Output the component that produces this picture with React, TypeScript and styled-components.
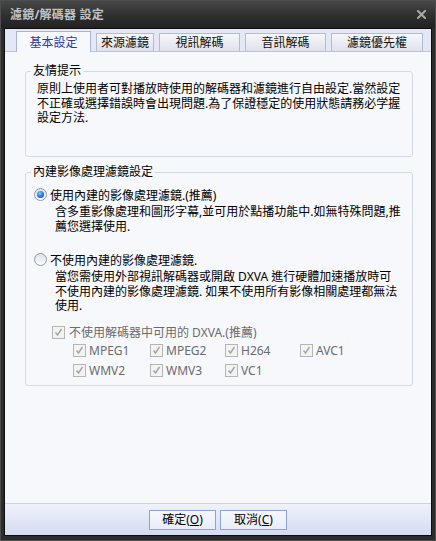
import styled, { createGlobalStyle, css } from "styled-components";

const GlobalStyle = createGlobalStyle`
  html, body {
    margin: 0;
    padding: 0;
    background: #2b2b2b;
  }
  body {
    font-family: "Noto Sans", "Noto Sans CJK TC", sans-serif;
    font-size: 12px;
    color: #000;
  }
`;

const tabs = [
  { label: "基本設定", width: 75, active: true },
  { label: "來源濾鏡", width: 58 },
  { label: "視訊解碼", width: 81 },
  { label: "音訊解碼", width: 81 },
  { label: "濾鏡優先權", width: 92 },
];

const codecs = ["MPEG1", "MPEG2", "H264", "AVC1", "WMV2", "WMV3", "VC1"];

export default function App() {
  return (
    <>
      <GlobalStyle />
      <Window>
        <TitleBar>
          <Title>濾鏡/解碼器 設定</Title>
          <CloseIcon />
        </TitleBar>
        <Client>
          <TabStrip>
            {tabs.map((t) => (
              <Tab key={t.label} $w={t.width} $active={t.active}>
                {t.label}
              </Tab>
            ))}
          </TabStrip>

          <Panel>
            <Group>
              <Legend>友情提示</Legend>
              <TipText>
                <Line>原則上使用者可對播放時使用的解碼器和濾鏡進行自由設定.當然設定</Line>
                <Line>不正確或選擇錯誤時會出現問題.為了保證穩定的使用狀態請務必学握</Line>
                <Line>設定方法.</Line>
              </TipText>
            </Group>

            <Group $spaced $pad={8}>
              <Legend $shift={-3}>內建影像處理濾鏡設定</Legend>
              <OptionRow $top={8}>
                <Radio $checked />
                <span>使用內建的影像處理濾鏡.(推薦)</span>
              </OptionRow>
              <Description>
                <Line>含多重影像處理和圖形字幕,並可用於點播功能中.如無特殊問題,推</Line>
                <Line>薦您選擇使用.</Line>
              </Description>

              <OptionRow $top={18}>
                <Radio />
                <span>不使用內建的影像處理濾鏡.</span>
              </OptionRow>
              <Description>
                <Line>當您需使用外部視訊解碼器或開啟 DXVA 進行硬體加速播放時可</Line>
                <Line>不使用內建的影像處理濾鏡. 如果不使用所有影像相關處理都無法</Line>
                <Line>使用.</Line>
              </Description>

              <CheckRow>
                <CheckBox />
                <span>不使用解碼器中可用的 DXVA.(推薦)</span>
              </CheckRow>
              <CodecGrid>
                {codecs.map((c) => (
                  <CodecItem key={c}>
                    <CheckBox />
                    <span>{c}</span>
                  </CodecItem>
                ))}
              </CodecGrid>
            </Group>
          </Panel>

          <Footer>
            <Button>
              確定(<u>O</u>)
            </Button>
            <Button>
              取消(<u>C</u>)
            </Button>
          </Footer>
        </Client>
      </Window>
    </>
  );
}

function CloseIcon() {
  return (
    <svg width="9" height="9" viewBox="0 0 9 9">
      <path
        d="M1 1 L8 8 M8 1 L1 8"
        stroke="#a9a9a9"
        strokeWidth="2"
        strokeLinecap="square"
      />
    </svg>
  );
}

function CheckBox() {
  return (
    <Box>
      <svg width="11" height="11" viewBox="0 0 11 11">
        <path
          d="M2.5 5.5 L4.5 8 L8.5 2"
          fill="none"
          stroke="#a4a4a4"
          strokeWidth="1.4"
        />
      </svg>
    </Box>
  );
}

const Window = styled.div`
  box-sizing: border-box;
  width: 436px;
  height: 541px;
  border: 1px solid #4d4d4d;
  background: #2c2c2c;
  padding-bottom: 4px;
  display: flex;
  flex-direction: column;
`;

const TitleBar = styled.div`
  height: 27px;
  flex-shrink: 0;
  display: flex;
  align-items: center;
  justify-content: space-between;
  padding: 0 9px 1px 9px;
  box-sizing: border-box;
  background: linear-gradient(#474747, #2f2f2f 55%, #222);
`;

const Title = styled.div`
  color: #c3c3c3;
  font-weight: bold;
  font-size: 12px;
  letter-spacing: 0.2px;
`;

const Client = styled.div`
  flex: 1;
  margin: 0 3px;
  border: 1px solid #0c0c0c;
  background: #f7f8fc;
  display: flex;
  flex-direction: column;
  overflow: hidden;
`;

const TabStrip = styled.div`
  box-sizing: border-box;
  height: 23px;
  flex-shrink: 0;
  display: flex;
  align-items: flex-end;
  gap: 5px;
  padding-left: 11px;
  background: #e4e8f6;
  border-bottom: 1px solid #bac4df;
`;

const Tab = styled.div<{ $w: number; $active?: boolean }>`
  box-sizing: border-box;
  width: ${(p) => p.$w}px;
  height: 18px;
  display: flex;
  align-items: center;
  justify-content: center;
  border: 1px solid #b4bbcc;
  border-bottom: none;
  background: linear-gradient(#f6f7fa, #dfe2eb);
  font-size: 12px;
  line-height: 1;
  color: #111;
  padding-top: 1px;
  ${(p) =>
    p.$active &&
    css`
      height: 21px;
      margin-bottom: -1px;
      border-color: #a8b5da;
      background: #f7f8fc;
      color: #2a3c9e;
      padding-top: 1px;
    `}
`;

const Panel = styled.div`
  flex: 1;
  padding: 12px 18px 0 20px;
`;

const Group = styled.fieldset<{ $spaced?: boolean; $pad?: number }>`
  margin: ${(p) => (p.$spaced ? "8px" : "0")} 0 0 0;
  padding: 0 8px 4px ${(p) => p.$pad ?? 11}px;
  border: 1px solid #d3dae6;
  border-radius: 3px;
  min-width: 0;
`;

const Legend = styled.legend<{ $shift?: number }>`
  padding: 0 2px;
  margin-left: ${(p) => p.$shift ?? -6}px;
  line-height: 14px;
  font-size: 12px;
`;

const Line = styled.div`
  line-height: 14.5px;
  white-space: nowrap;
`;

const TipText = styled.div`
  height: 74px;
  padding-top: 4px;
  box-sizing: border-box;
`;

const OptionRow = styled.div<{ $top: number }>`
  display: flex;
  align-items: center;
  gap: 3px;
  height: 15px;
  margin-top: ${(p) => p.$top}px;
  white-space: nowrap;
`;

const Radio = styled.span<{ $checked?: boolean }>`
  box-sizing: border-box;
  width: 13px;
  height: 13px;
  flex-shrink: 0;
  border-radius: 50%;
  border: 1px solid #8d97ac;
  background: linear-gradient(#dde1e9, #fbfcfe);
  display: flex;
  align-items: center;
  justify-content: center;
  ${(p) =>
    p.$checked &&
    css`
      &::after {
        content: "";
        width: 7px;
        height: 7px;
        border-radius: 50%;
        background: radial-gradient(circle at 40% 35%, #8fd0ff, #2f7ee0 45%, #14409e);
      }
    `}
`;

const Description = styled.div`
  margin: 3px 0 0 21px;
`;

const CheckRow = styled.div`
  display: flex;
  align-items: center;
  gap: 4px;
  height: 15px;
  margin: 11px 0 0 18px;
  color: #6b6b6b;
  white-space: nowrap;
`;

const Box = styled.span`
  box-sizing: border-box;
  width: 13px;
  height: 13px;
  flex-shrink: 0;
  border: 1px solid #b5b5b5;
  background: #f3f3f3;
  display: flex;
  align-items: center;
  justify-content: center;
`;

const CodecGrid = styled.div`
  display: grid;
  grid-template-columns: 77px 75px 75px auto;
  grid-auto-rows: 20px;
  margin: 1px 0 0 39px;
`;

const CodecItem = styled.div`
  display: flex;
  align-items: center;
  gap: 3px;
  color: #6b6b6b;
  white-space: nowrap;
`;

const Footer = styled.div`
  box-sizing: border-box;
  height: 32px;
  flex-shrink: 0;
  border-top: 1px solid #ccd2de;
  background: linear-gradient(#f0f2fa, #d4dbf2);
  display: flex;
  justify-content: center;
  align-items: flex-start;
  gap: 4px;
  padding-top: 6px;
`;

const Button = styled.div`
  box-sizing: border-box;
  width: 67px;
  height: 20px;
  border: 1px solid #8ca2de;
  background: linear-gradient(#f6f8fd, #e9edf9);
  display: flex;
  align-items: center;
  justify-content: center;
  font-size: 12px;
  line-height: 1;
`;
